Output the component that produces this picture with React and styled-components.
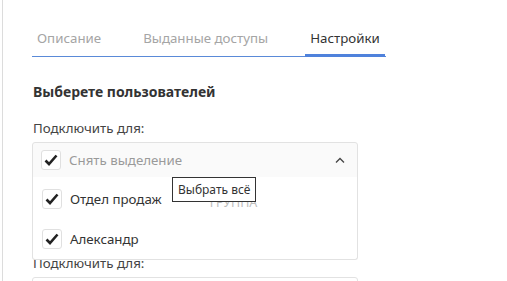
import React from "react";
import styled, { createGlobalStyle } from "styled-components";

const GlobalStyle = createGlobalStyle`
  body {
    margin: 0;
    background: #fff;
    font-family: "Noto Sans", "Open Sans", sans-serif;
    color: #333;
  }
`;

const Panel = styled.div`
  margin-left: 2px;
  border-left: 1px solid #dcdcdc;
  padding: 29px 0 0 29px;
  box-sizing: border-box;
  overflow: hidden;
  height: 281px;
`;

const Tabs = styled.div`
  display: flex;
  width: 354px;
  border-bottom: 1px solid #5a8ad8;
  gap: 32px;
`;

const Tab = styled.div`
  padding: 0 5px 6px;
  font-size: 13.3px;
  line-height: 19px;
  white-space: nowrap;
  flex-shrink: 0;
  color: ${(p) => (p.active ? "#333" : "#a5a5a5")};
  border-bottom: 3px solid ${(p) => (p.active ? "#4f82dc" : "transparent")};
  margin-bottom: -1px;
`;

const Heading = styled.h3`
  margin: 25px 0 0 1px;
  font-size: 14px;
  line-height: 20px;
  font-weight: 700;
  color: #333;
`;

const Field = styled.div`
  margin-top: ${(p) => p.top}px;
  width: 326px;
`;

const Label = styled.div`
  font-size: 13.3px;
  line-height: 20px;
  color: #444;
  margin-left: 1px;
  margin-bottom: 4px;
`;

const Select = styled.div`
  position: relative;
  border: 1px solid #e2e2e2;
  border-radius: ${(p) => (p.open ? "3px 3px 0 0" : "3px")};
  height: 34px;
  background: ${(p) => (p.open ? "#fafafa" : "#fff")};
`;

const Header = styled.div`
  display: flex;
  align-items: center;
  height: 34px;
  padding: 0 12px 0 8px;
  gap: 8px;
`;

const HeaderText = styled.span`
  flex: 1;
  font-size: 13.3px;
  color: #9a9a9a;
`;

const Menu = styled.div`
  position: absolute;
  top: 34px;
  left: -1px;
  right: -1px;
  padding-top: 2px;
  background: #fff;
  border: 1px solid #e2e2e2;
  border-top: none;
  border-radius: 0 0 3px 3px;
  z-index: 2;
`;

const Item = styled.div`
  display: flex;
  align-items: center;
  height: 40px;
  padding: 0 9px;
  gap: 8px;
  font-size: 13.3px;
  color: #333;
`;

const Tag = styled.span`
  margin: 6px 0 0 40px;
  font-size: 12.5px;
  color: #bdbdbd;
  text-transform: uppercase;
`;

const Box = styled.span`
  width: 18px;
  height: 18px;
  border: 1px solid #e0e0e0;
  border-radius: 3px;
  background: #fff;
  display: flex;
  align-items: center;
  justify-content: center;
  flex-shrink: 0;
`;

const Tooltip = styled.div`
  position: absolute;
  left: 139px;
  top: 34px;
  padding: 0 5px;
  height: 23px;
  line-height: 23px;
  font-size: 12px;
  color: #333;
  background: #fff;
  border: 1px solid #333;
  white-space: nowrap;
  z-index: 3;
`;

const Check = () => (
  <Box>
    <svg width="14" height="12" viewBox="0 0 14 12">
      <path d="M1.5 6.5 L5 10 L12.5 1.5" fill="none" stroke="#222" strokeWidth="2.6" strokeLinejoin="miter" />
    </svg>
  </Box>
);

const Chevron = () => (
  <svg width="10" height="6" viewBox="0 0 10 6">
    <path d="M1 5.5 L5 1.5 L9 5.5" fill="none" stroke="#444" strokeWidth="1.3" />
  </svg>
);

export default function App() {
  return (
    <>
      <GlobalStyle />
      <Panel>
        <Tabs>
          <Tab>Описание</Tab>
          <Tab>Выданные доступы</Tab>
          <Tab active>Настройки</Tab>
        </Tabs>
        <Heading>Выберете пользователей</Heading>
        <Field top={16}>
          <Label>Подключить для:</Label>
          <Select open>
            <Header>
              <Check />
              <HeaderText>Снять выделение</HeaderText>
              <Chevron />
            </Header>
            <Tooltip>Выбрать всё</Tooltip>
            <Menu>
              <Item>
                <Check />
                Отдел продаж
                <Tag>Группа</Tag>
              </Item>
              <Item>
                <Check />
                Александр
              </Item>
            </Menu>
          </Select>
        </Field>
        <Field top={75}>
          <Label>Подключить для:</Label>
          <Select />
        </Field>
      </Panel>
    </>
  );
}
